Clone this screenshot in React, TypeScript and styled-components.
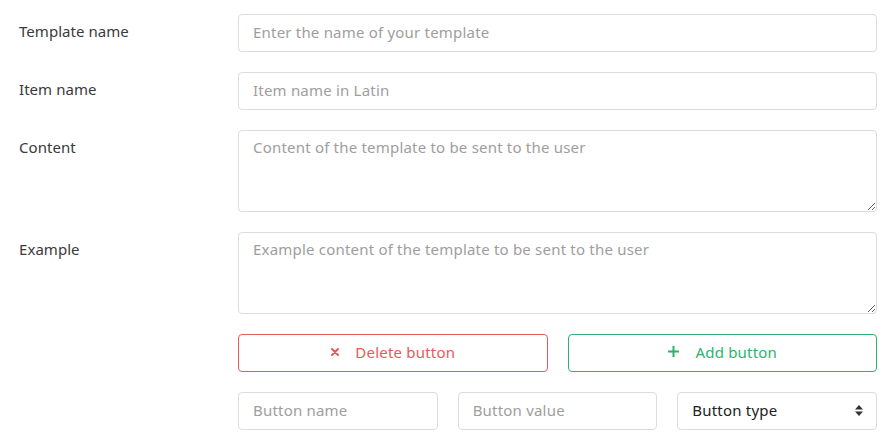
import React from "react";
import styled, { createGlobalStyle } from "styled-components";

const FONT = `"Noto Sans", Lato, sans-serif`;

const Global = createGlobalStyle`
  html, body { margin: 0; padding: 0; background: #fff; }
  body { font-family: ${FONT}; color: #333; }
  * { box-sizing: border-box; }
`;

const Form = styled.div`
  display: flex;
  flex-direction: column;
  gap: 20px;
  padding: 14px 7px 0 19px;
`;

const Row = styled.div`
  display: grid;
  grid-template-columns: 219px 1fr;
`;

const Label = styled.label`
  font-size: 15px;
  line-height: 20px;
  padding-top: 7px;
  color: #3a3a3a;
  letter-spacing: 0.05px;
`;

const fieldBase = `
  width: 100%;
  border: 1px solid #dcdcdc;
  border-radius: 4px;
  font-family: ${FONT};
  font-size: 15px;
  letter-spacing: 0.2px;
  color: #333;
  padding: 0 14px;
  outline: none;
  background: #fff;
  &::placeholder { color: #9e9e9e; }
`;

const Input = styled.input`
  ${fieldBase}
  height: 38px;
  padding-bottom: 3px;
`;

const TextArea = styled.textarea`
  ${fieldBase}
  height: 82px;
  padding-top: 6px;
  line-height: 20px;
  resize: vertical;
  display: block;
`;

const Pair = styled.div`
  display: grid;
  grid-template-columns: 1fr 1fr;
  gap: 20px;
`;

const Triple = styled.div`
  display: grid;
  grid-template-columns: 1fr 1fr 1fr;
  gap: 20px;
`;

const ActionButton = styled.button<{ $tone: "red" | "green" }>`
  height: 38px;
  border-radius: 4px;
  background: #fff;
  border: 1px solid ${(p) => (p.$tone === "red" ? "#e85a5a" : "#2db36b")};
  color: ${(p) => (p.$tone === "red" ? "#e85a5a" : "#2db36b")};
  font-family: ${FONT};
  font-size: 15px;
  letter-spacing: 0.2px;
  display: flex;
  align-items: center;
  justify-content: center;
  gap: 15px;
  padding: 0 0 3px;
  cursor: pointer;
`;

const SelectWrap = styled.div`
  position: relative;
`;

const Select = styled.select`
  ${fieldBase}
  height: 38px;
  padding-bottom: 3px;
  appearance: none;
  -webkit-appearance: none;
  color: #222;
`;

const Caret = styled.svg`
  position: absolute;
  right: 14px;
  top: 13px;
  pointer-events: none;
`;

export default function App() {
  return (
    <>
      <Global />
      <Form>
        <Row>
          <Label>Template name</Label>
          <Input placeholder="Enter the name of your template" />
        </Row>
        <Row>
          <Label>Item name</Label>
          <Input placeholder="Item name in Latin" />
        </Row>
        <Row>
          <Label>Content</Label>
          <TextArea placeholder="Content of the template to be sent to the user" />
        </Row>
        <Row>
          <Label>Example</Label>
          <TextArea placeholder="Example content of the template to be sent to the user" />
        </Row>
        <Row>
          <span />
          <Pair>
            <ActionButton $tone="red">
              <svg width="10" height="10" viewBox="0 0 10 10">
                <path d="M2 2 L8 8 M8 2 L2 8" stroke="#e85a5a" strokeWidth="2" strokeLinecap="round" />
              </svg>
              Delete button
            </ActionButton>
            <ActionButton $tone="green">
              <svg width="13" height="13" viewBox="0 0 13 13">
                <path d="M6.5 1 V12 M1 6.5 H12" stroke="#2db36b" strokeWidth="2" />
              </svg>
              Add button
            </ActionButton>
          </Pair>
        </Row>
        <Row>
          <span />
          <Triple>
            <Input placeholder="Button name" />
            <Input placeholder="Button value" />
            <SelectWrap>
              <Select defaultValue="">
                <option value="">Button type</option>
              </Select>
              <Caret width="8" height="11" viewBox="0 0 8 11">
                <path d="M4 0 L8 4.5 H0 Z M4 11 L0 6.5 H8 Z" fill="#333" />
              </Caret>
            </SelectWrap>
          </Triple>
        </Row>
      </Form>
    </>
  );
}
